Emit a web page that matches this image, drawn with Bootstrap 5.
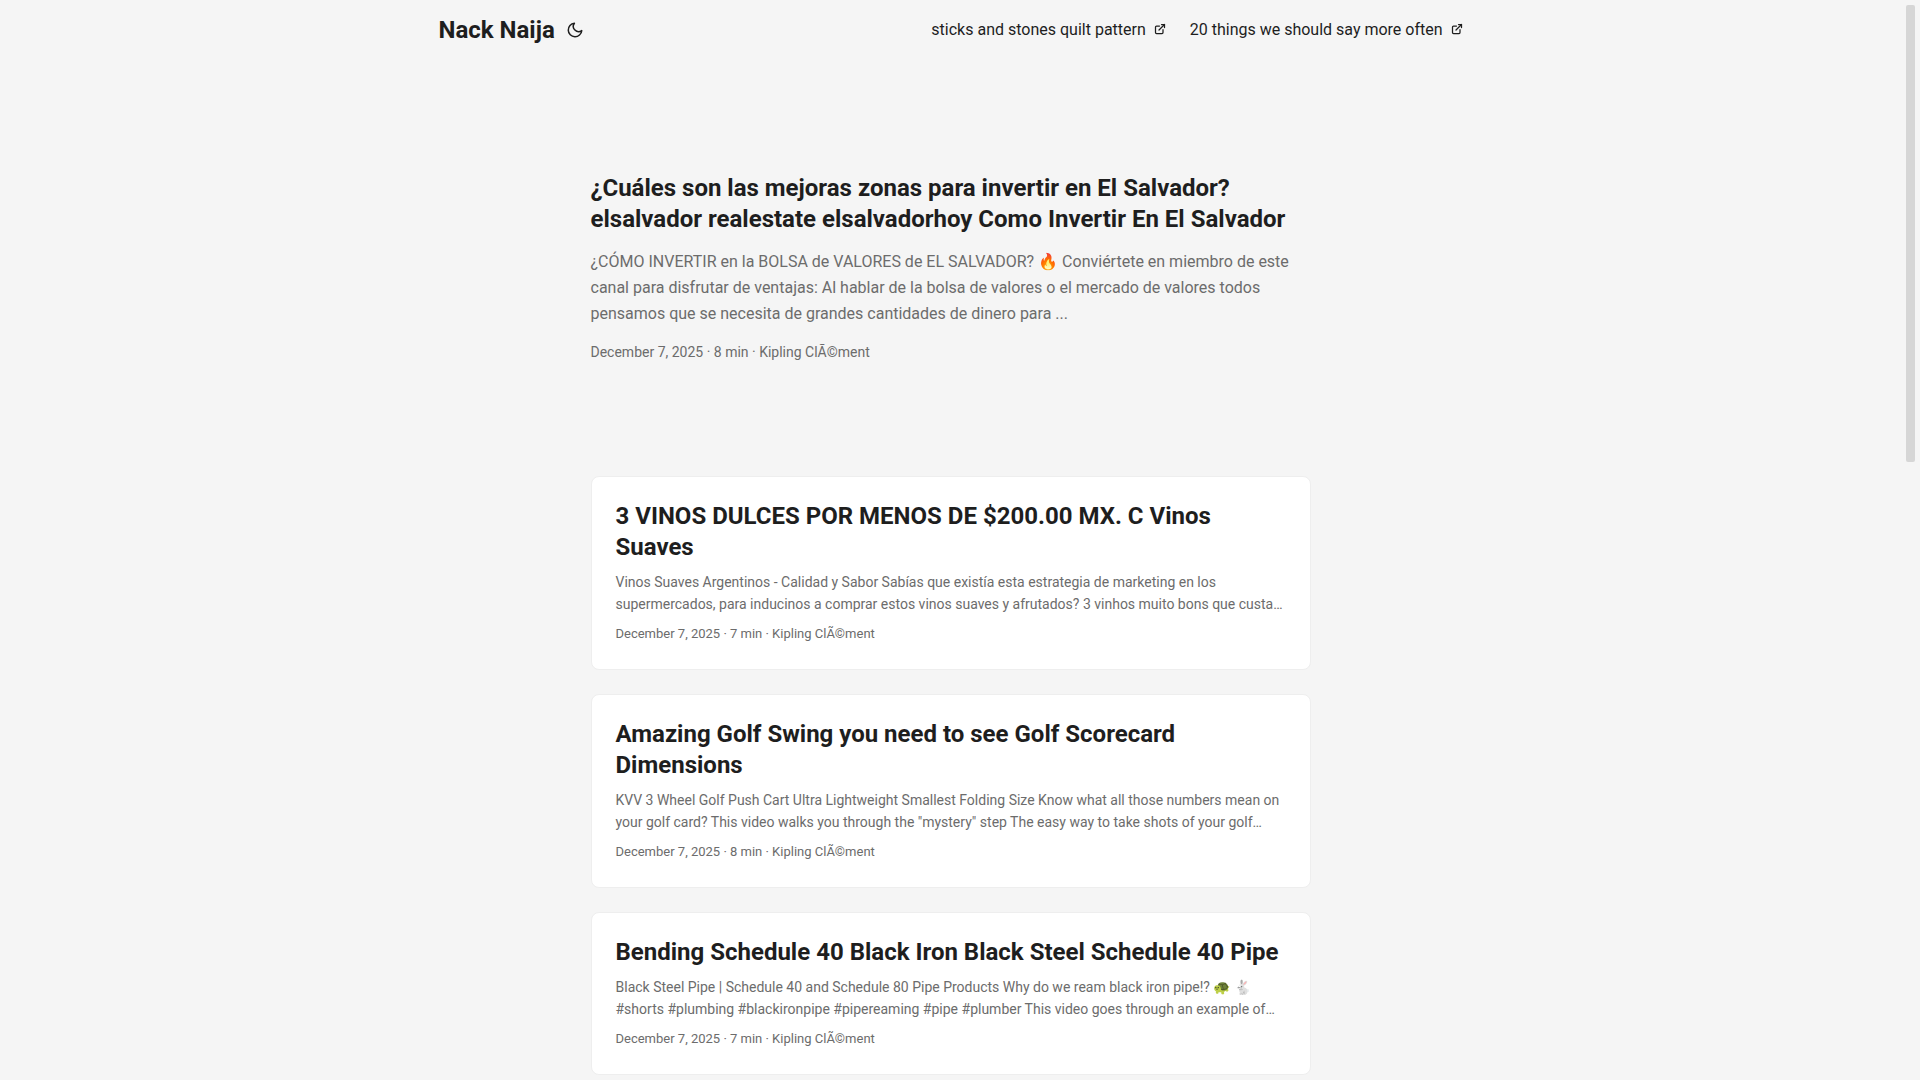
<!DOCTYPE html>
<html lang="en">
<head>
<meta charset="utf-8">
<meta name="viewport" content="width=device-width, initial-scale=1">
<title>Nack Naija</title>
<link href="https://cdn.jsdelivr.net/npm/bootstrap@5.3.0/dist/css/bootstrap.min.css" rel="stylesheet">
<style>
  body { background: #f5f5f5; color: #1e1e1e; font-family: Roboto, "Noto Sans", sans-serif; padding-right: 19px; }
  a { color: inherit; text-decoration: none; }
  .site-nav { max-width: 1072px; min-height: 60px; }
  .site-logo, .post-title { font-size: 24px; font-weight: 700; }
  .theme-toggle { color: inherit; line-height: 0; }
  .site-main { max-width: 768px; }
  .post-title { line-height: 31px; margin: 0; }
  .post-excerpt, .post-meta { color: #6c6c6c; margin: 0; }
  .hero-entry { min-height: 320px; gap: 14px; }
  .hero-entry .post-excerpt { font-size: 16px; line-height: 26px; }
  .hero-entry .post-meta { font-size: 14px; line-height: 22px; }
  .post-card { border: 1px solid #eee; border-radius: 8px; gap: 8px; }
  .post-card .post-excerpt { font-size: 14px; line-height: 22px; }
  .post-card .post-meta { font-size: 13px; line-height: 22px; }
  .scroll-thumb { position: fixed; top: 5px; right: 5px; width: 9px; height: 42.3vh; border-radius: 2px; background: #d6d6d6; }
</style>
<script src="https://cdn.jsdelivr.net/npm/bootstrap@5.3.0/dist/js/bootstrap.bundle.min.js" defer></script>
</head>
<body>
<header>
  <nav class="site-nav d-flex flex-wrap align-items-center justify-content-between mx-auto px-4">
    <div class="d-flex align-items-center gap-2">
      <a class="site-logo" href="#">Nack Naija</a>
      <button class="theme-toggle btn p-0 border-0" type="button" aria-label="Toggle theme">
        <svg width="24" height="18" viewBox="0 0 24 24" fill="none" stroke="currentColor" stroke-width="2" stroke-linecap="round" stroke-linejoin="round"><path d="M21 12.79A9 9 0 1 1 11.21 3 7 7 0 0 0 21 12.79z"/></svg>
      </button>
    </div>
    <ul class="list-unstyled d-flex flex-wrap gap-4 m-0">
      <li><a href="#">sticks and stones quilt pattern&nbsp;
        <svg class="align-baseline" width="12" height="12" viewBox="0 0 24 24" fill="none" stroke="currentColor" stroke-width="2.5" stroke-linecap="round" stroke-linejoin="round"><path d="M18 13v6a2 2 0 01-2 2H5a2 2 0 01-2-2V8a2 2 0 012-2h6"/><path d="M15 3h6v6"/><path d="M10 14L21 3"/></svg></a></li>
      <li><a href="#">20 things we should say more often&nbsp;
        <svg class="align-baseline" width="12" height="12" viewBox="0 0 24 24" fill="none" stroke="currentColor" stroke-width="2.5" stroke-linecap="round" stroke-linejoin="round"><path d="M18 13v6a2 2 0 01-2 2H5a2 2 0 01-2-2V8a2 2 0 012-2h6"/><path d="M15 3h6v6"/><path d="M10 14L21 3"/></svg></a></li>
    </ul>
  </nav>
</header>
<main class="site-main mx-auto px-4 pt-4">
  <article class="hero-entry d-flex flex-column justify-content-center mt-4 mb-5">
    <h1 class="post-title"><a href="#">¿Cuáles son las mejoras zonas para invertir en El Salvador? elsalvador realestate elsalvadorhoy Como Invertir En El Salvador</a></h1>
    <p class="post-excerpt">¿CÓMO INVERTIR en la BOLSA de VALORES de EL SALVADOR? 🔥 Conviértete en miembro de este canal para disfrutar de ventajas: Al hablar de la bolsa de valores o el mercado de valores todos pensamos que se necesita de grandes cantidades de dinero para ...</p>
    <p class="post-meta">December 7, 2025 · 8 min · Kipling ClÃ©ment</p>
  </article>
  <div class="d-flex flex-column gap-4">
    <article class="post-card bg-white d-flex flex-column p-4">
      <h2 class="post-title"><a href="#">3 VINOS DULCES POR MENOS DE $200.00 MX. C Vinos Suaves</a></h2>
      <p class="post-excerpt">Vinos Suaves Argentinos - Calidad y Sabor Sabías que existía esta estrategia de marketing en los supermercados, para inducinos a comprar estos vinos suaves y afrutados? 3 vinhos muito bons que custa…</p>
      <p class="post-meta">December 7, 2025 · 7 min · Kipling ClÃ©ment</p>
    </article>
    <article class="post-card bg-white d-flex flex-column p-4">
      <h2 class="post-title"><a href="#">Amazing Golf Swing you need to see Golf Scorecard Dimensions</a></h2>
      <p class="post-excerpt">KVV 3 Wheel Golf Push Cart Ultra Lightweight Smallest Folding Size Know what all those numbers mean on your golf card? This video walks you through the "mystery" step The easy way to take shots of your golf…</p>
      <p class="post-meta">December 7, 2025 · 8 min · Kipling ClÃ©ment</p>
    </article>
    <article class="post-card bg-white d-flex flex-column p-4">
      <h2 class="post-title"><a href="#">Bending Schedule 40 Black Iron Black Steel Schedule 40 Pipe</a></h2>
      <p class="post-excerpt">Black Steel Pipe | Schedule 40 and Schedule 80 Pipe Products Why do we ream black iron pipe!? 🐢 🐇 #shorts #plumbing #blackironpipe #pipereaming #pipe #plumber This video goes through an example of…</p>
      <p class="post-meta">December 7, 2025 · 7 min · Kipling ClÃ©ment</p>
    </article>
  </div>
</main>
<div class="scroll-thumb" aria-hidden="true"></div>
</body>
</html>
